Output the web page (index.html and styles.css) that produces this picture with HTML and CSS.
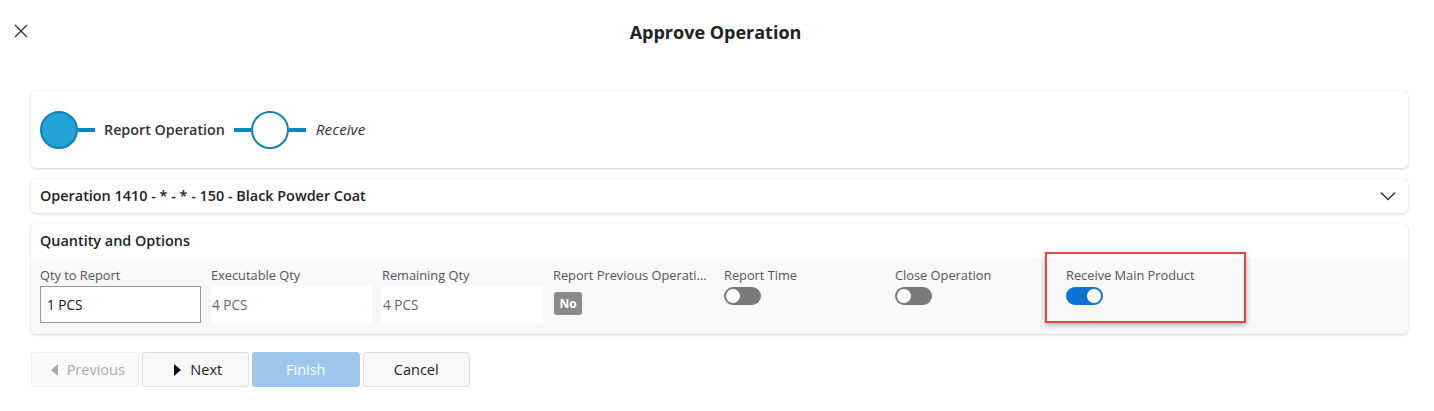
FILE: index.html
```html
<!DOCTYPE html>
<html>
<head>
<meta charset="utf-8">
<link rel="stylesheet" href="styles.css">
</head>
<body>
<div class="page">
  <header class="topbar">
    <button class="close" aria-label="Close">
      <svg width="14" height="14" viewBox="0 0 14 14"><path d="M1 1 L13 13 M13 1 L1 13" stroke="#333" stroke-width="1.3" fill="none"/></svg>
    </button>
    <h1 class="title">Approve Operation</h1>
  </header>

  <div class="content">
    <section class="card stepper">
      <span class="dot dot-filled"></span>
      <span class="line"></span>
      <span class="step-label">Report Operation</span>
      <span class="line"></span>
      <span class="dot dot-empty"></span>
      <span class="line"></span>
      <span class="step-label italic">Receive</span>
    </section>

    <section class="card opbar">
      <span class="op-title">Operation 1410 - * - * - 150 - Black Powder Coat</span>
      <svg class="chev" width="16" height="10" viewBox="0 0 16 10"><path d="M1 1.5 L8 8.5 L15 1.5" stroke="#333" stroke-width="1.5" fill="none"/></svg>
    </section>

    <section class="card qty">
      <div class="qty-head">Quantity and Options</div>
      <div class="fields">
        <div class="field">
          <div class="label">Qty to Report</div>
          <div class="input edit">1 PCS</div>
        </div>
        <div class="field">
          <div class="label">Executable Qty</div>
          <div class="input ro">4 PCS</div>
        </div>
        <div class="field">
          <div class="label">Remaining Qty</div>
          <div class="input ro">4 PCS</div>
        </div>
        <div class="field">
          <div class="label">Report Previous Operati...</div>
          <div class="badge">No</div>
        </div>
        <div class="field">
          <div class="label">Report Time</div>
          <div class="toggle off"><span class="knob"></span></div>
        </div>
        <div class="field">
          <div class="label">Close Operation</div>
          <div class="toggle off"><span class="knob"></span></div>
        </div>
        <div class="field highlight-wrap">
          <div class="label">Receive Main Product</div>
          <div class="toggle on"><span class="knob"></span></div>
          <div class="highlight"></div>
        </div>
      </div>
    </section>

    <div class="actions">
      <button class="btn disabled"><svg width="7" height="12" viewBox="0 0 7 12"><path d="M7 0 L0 6 L7 12 Z" fill="#aaa"/></svg>Previous</button>
      <button class="btn"><svg width="7" height="12" viewBox="0 0 7 12"><path d="M0 0 L7 6 L0 12 Z" fill="#111"/></svg>Next</button>
      <button class="btn primary">Finish</button>
      <button class="btn">Cancel</button>
    </div>
  </div>
</div>
</body>
</html>
```

FILE: styles.css
```css
* { box-sizing: border-box; }
html, body { margin: 0; padding: 0; background: #fff; }
body {
  font-family: "Open Sans", "Liberation Sans", sans-serif;
  color: #333;
  width: 1434px;
  height: 411px;
  overflow: hidden;
}
.page { padding: 0; }
.topbar {
  position: relative;
  height: 64px;
  display: flex;
  align-items: center;
  justify-content: center;
}
.close {
  position: absolute;
  left: 14px;
  top: 24px;
  width: 16px;
  height: 16px;
  padding: 0;
  border: 0;
  background: none;
  display: flex;
}
.title {
  margin: 0;
  font-size: 18px;
  font-weight: 700;
  color: #222;
  line-height: 1;
  margin-top: -1px;
  margin-right: 3px;
}
.content {
  padding: 27px 26px 0 31px;
  display: flex;
  flex-direction: column;
}
.card {
  background: #fff;
  border-radius: 5px;
  box-shadow: 0 1px 3px rgba(0,0,0,0.16), 0 0 1px rgba(0,0,0,0.1);
}
.stepper {
  height: 77px;
  display: flex;
  align-items: center;
  padding-left: 9px;
}
.dot {
  width: 38px;
  height: 38px;
  border-radius: 50%;
  border: 2px solid #1780b3;
  flex: none;
}
.dot-filled { background: #23a3d3; }
.dot-empty { background: #fff; }
.line {
  width: 17px;
  height: 4px;
  background: #0a86be;
  flex: none;
}
.step-label {
  font-size: 14.3px;
  font-weight: 600;
  color: #333;
  margin: 0 9px;
  margin-top: -1px;
}
.step-label.italic {
  font-style: italic;
  font-weight: 400;
  font-size: 15.3px;
  margin-left: 10px;
}
.opbar {
  margin-top: 11px;
  height: 34px;
  display: flex;
  align-items: center;
  justify-content: space-between;
  padding: 0 12px 0 9px;
}
.op-title {
  font-size: 14.4px;
  font-weight: 600;
  color: #222;
  margin-top: -2px;
}
.qty {
  margin-top: 11px;
  height: 110px;
  overflow: visible;
  display: flex;
  flex-direction: column;
}
.qty-head {
  height: 35px;
  display: flex;
  align-items: center;
  padding-left: 9px;
  padding-bottom: 2px;
  font-size: 14.4px;
  font-weight: 600;
  color: #222;
}
.fields {
  flex: 1;
  background: #f8f8f8;
  border-radius: 0 0 5px 5px;
  display: flex;
  gap: 10px;
  padding: 7px 0 0 9px;
}
.field {
  width: 161px;
  display: flex;
  flex-direction: column;
  position: relative;
}
.label {
  font-size: 12.8px;
  color: #555;
  height: 20px;
  line-height: 19px;
  white-space: nowrap;
}
.input {
  height: 37px;
  font-size: 13.6px;
  display: flex;
  align-items: center;
  padding-left: 6px;
}
.input.edit {
  border: 1px solid #999;
  background: #fff;
  color: #111;
  padding-left: 6px;
}
.input.ro {
  background: #fff;
  color: #666;
  padding-left: 1px;
}
.badge {
  margin-top: 6px;
  margin-left: 1px;
  width: 28px;
  height: 23px;
  border-radius: 3px;
  background: #8a8a8a;
  color: #fff;
  font-size: 12px;
  font-weight: 700;
  display: flex;
  align-items: center;
  justify-content: center;
}
.toggle {
  margin-top: 1px;
  width: 37px;
  height: 18px;
  border-radius: 9px;
  position: relative;
}
.toggle.off { background: #7b7b7b; }
.toggle.on { background: #0a74d4; }
.knob {
  position: absolute;
  top: 1px;
  width: 16px;
  height: 16px;
  border-radius: 50%;
  background: #fff;
}
.toggle.off .knob { left: 1px; border: 1px solid #777; }
.toggle.on .knob { right: 1px; border: 1px solid #0a74d4; }
.highlight {
  position: absolute;
  left: -21px;
  top: -14px;
  width: 201px;
  height: 71px;
  border: 2px solid #e0474a;
  box-shadow: 0 2px 5px rgba(0,0,0,0.3);
  pointer-events: none;
}
.actions {
  margin-top: 18px;
  display: flex;
  gap: 3px;
}
.btn {
  width: 107.5px;
  height: 35px;
  border: 1px solid #e0e0e0;
  border-radius: 3px;
  background: #f7f7f7;
  font-family: inherit;
  font-size: 14.5px;
  color: #222;
  display: flex;
  align-items: center;
  justify-content: center;
  gap: 9px;
  padding: 0 0 0 6px;
}
.btn.primary, .btn:last-child { padding: 0; }
.btn.disabled {
  color: #aaa;
  background: #fafafa;
  border-color: #eee;
}
.btn.primary {
  background: #9dc8ec;
  border-color: #9dc8ec;
  color: #fff;
}
```
